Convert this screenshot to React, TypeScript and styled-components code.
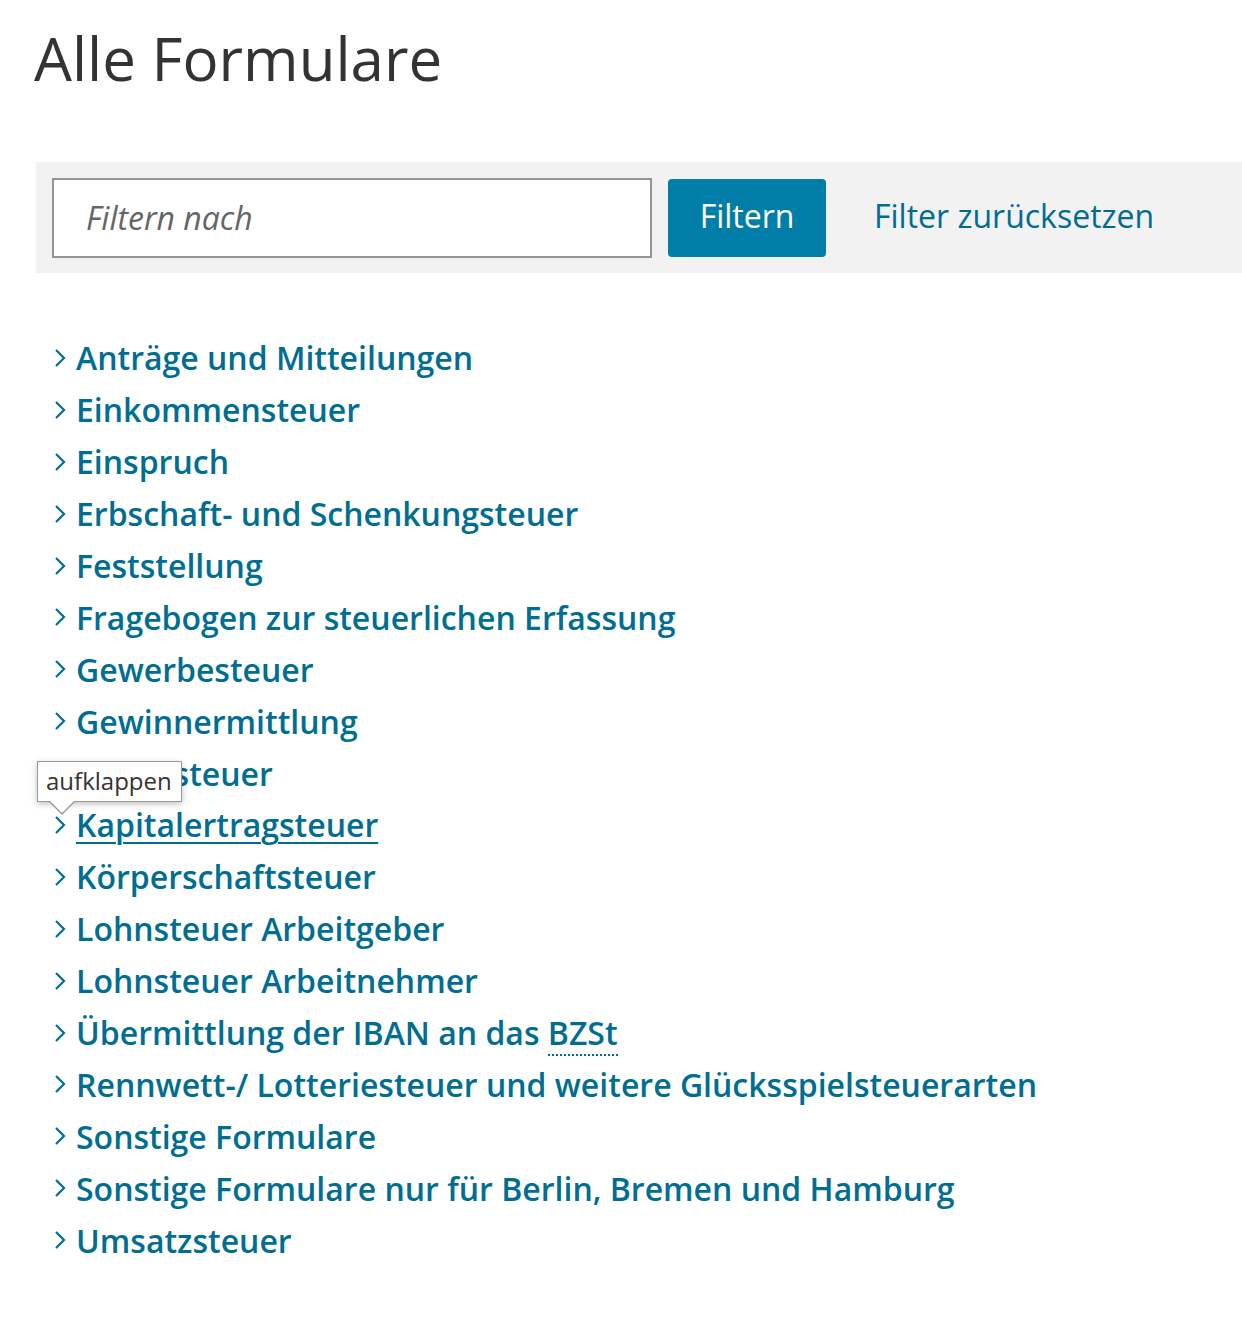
import React from "react";
import styled, { createGlobalStyle } from "styled-components";

const Global = createGlobalStyle`
  html, body { margin: 0; padding: 0; background: #fff; }
  body { font-family: "Open Sans", "Liberation Sans", sans-serif; color: #333; }
`;

const Page = styled.main`
  padding: 0 0 40px 36px;
`;

const Title = styled.h1`
  margin: 0;
  padding-top: 18px;
  font-size: 60px;
  font-weight: 400;
  line-height: 80px;
  color: #333;
  margin-left: -2px;
`;

const FilterBar = styled.form`
  margin-top: 64px;
  background: #f2f2f2;
  padding: 16px;
  display: flex;
  align-items: center;
  gap: 16px;
  height: 111px;
  box-sizing: border-box;
`;

const Input = styled.input`
  width: 600px;
  height: 80px;
  box-sizing: border-box;
  border: 2px solid #949494;
  background: #fff;
  padding: 0 32px;
  font-family: inherit;
  font-size: 32px;
  &::placeholder { color: #666; font-style: italic; }
`;

const Button = styled.button`
  height: 78px;
  width: 158px;
  border: none;
  border-radius: 4px;
  background: #007ea8;
  color: #fff;
  font-family: inherit;
  font-size: 32px;
  padding: 0 0 4px;
`;

const Reset = styled.a`
  margin-left: 32px;
  margin-bottom: 4px;
  font-size: 32px;
  color: #006c93;
  text-decoration: none;
`;

const List = styled.ul`
  list-style: none;
  margin: 59px 0 0;
  padding: 0 0 0 18px;
`;

const Item = styled.li`
  position: relative;
  display: flex;
  align-items: center;
  height: 51.9px;
`;

const Chevron = styled.svg`
  width: 12px;
  height: 20px;
  margin-right: 10px;
  flex: none;
`;

const Link = styled.a<{ $underline?: boolean }>`
  font-size: 32px;
  font-weight: 600;
  color: #006e92;
  text-decoration: ${(p) => (p.$underline ? "underline" : "none")};
  text-underline-offset: 5px;
  text-decoration-thickness: 2px;
  white-space: nowrap;
`;

const Abbr = styled.abbr`
  text-decoration: none;
  border-bottom: 2px dotted #006e92;
`;

const Tooltip = styled.div`
  position: absolute;
  left: -17px;
  top: -38px;
  z-index: 2;
  background: #fff;
  border: 1px solid #999;
  box-shadow: 0 2px 6px rgba(0, 0, 0, 0.25);
  padding: 4px 9px 5px 8px;
  font-size: 24px;
  line-height: 30px;
  color: #333;
  font-weight: 400;
  &::before,
  &::after {
    content: "";
    position: absolute;
    width: 0;
    height: 0;
    border-style: solid;
    border-color: transparent;
  }
  &::before {
    left: 10px;
    bottom: -14px;
    border-width: 14px 14px 0 14px;
    border-top-color: #999;
  }
  &::after {
    left: 11px;
    bottom: -12px;
    border-width: 13px 13px 0 13px;
    border-top-color: #fff;
  }
`;

const items = [
  "Anträge und Mitteilungen",
  "Einkommensteuer",
  "Einspruch",
  "Erbschaft- und Schenkungsteuer",
  "Feststellung",
  "Fragebogen zur steuerlichen Erfassung",
  "Gewerbesteuer",
  "Gewinnermittlung",
  "Grundsteuer",
  "Kapitalertragsteuer",
  "Körperschaftsteuer",
  "Lohnsteuer Arbeitgeber",
  "Lohnsteuer Arbeitnehmer",
  "IBAN",
  "Rennwett-/ Lotteriesteuer und weitere Glücksspielsteuerarten",
  "Sonstige Formulare",
  "Sonstige Formulare nur für Berlin, Bremen und Hamburg",
  "Umsatzsteuer",
];

const Arrow = () => (
  <Chevron viewBox="0 0 12 20">
    <path d="M2 2 L10 10 L2 18" fill="none" stroke="#006e92" strokeWidth="2.2" />
  </Chevron>
);

export default function App() {
  return (
    <>
      <Global />
      <Page>
        <Title>Alle Formulare</Title>
        <FilterBar onSubmit={(e) => e.preventDefault()}>
          <Input placeholder="Filtern nach" />
          <Button type="submit">Filtern</Button>
          <Reset href="#">Filter zurücksetzen</Reset>
        </FilterBar>
        <List>
          {items.map((t) => (
            <Item key={t}>
              <Arrow />
              {t === "IBAN" ? (
                <Link href="#">
                  Übermittlung der IBAN an das <Abbr title="Bundeszentralamt für Steuern">BZSt</Abbr>
                </Link>
              ) : (
                <Link href="#" $underline={t === "Kapitalertragsteuer"}>{t}</Link>
              )}
              {t === "Kapitalertragsteuer" && <Tooltip>aufklappen</Tooltip>}
            </Item>
          ))}
        </List>
      </Page>
    </>
  );
}
